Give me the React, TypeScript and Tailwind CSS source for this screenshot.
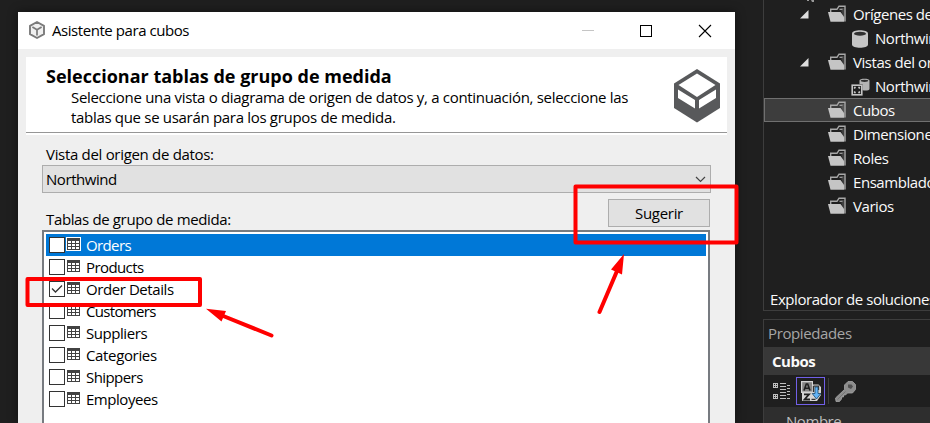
import React from "react";

const tables = [
  { name: "Orders", selected: true, tracking: "tracking-[-0.63px]" },
  { name: "Products", tracking: "tracking-[-0.59px]" },
  { name: "Order Details", checked: true, tracking: "tracking-[-0.42px]" },
  { name: "Customers", tracking: "tracking-[-0.68px]" },
  { name: "Suppliers", tracking: "tracking-[-0.44px]" },
  { name: "Categories", tracking: "tracking-[-0.35px]" },
  { name: "Shippers", tracking: "tracking-[-0.57px]" },
  { name: "Employees", tracking: "tracking-[-0.46px]" },
];

type TreeItem = { label: string; icon: "folder" | "db" | "view"; open?: boolean; selected?: boolean };

const tree: TreeItem[] = [
  { label: "Orígenes de", icon: "folder", open: true },
  { label: "Northwind", icon: "db" },
  { label: "Vistas del or", icon: "folder", open: true },
  { label: "Northwind", icon: "view" },
  { label: "Cubos", icon: "folder", selected: true },
  { label: "Dimensiones", icon: "folder" },
  { label: "Roles", icon: "folder" },
  { label: "Ensamblados", icon: "folder" },
  { label: "Varios", icon: "folder" },
];

function CubeOutline() {
  return (
    <svg width="16" height="18" viewBox="0 0 16 18" fill="#f0f0f0" stroke="#7b7b7b">
      <path d="M8 1 15 4.8V13.2L8 17 1 13.2V4.8Z" strokeWidth="1.9" strokeLinejoin="round" />
      <path d="M3.4 6 8 8.8 12.6 6M8 8.8V14.6" fill="none" strokeWidth="1.7" />
    </svg>
  );
}

function CubeLogo() {
  return (
    <svg width="46" height="54" viewBox="0 0 46 54">
      <path d="M23 0 46 14.5V39L23 53.500 0 39V14.500Z" fill="#58595b" />
      <path d="M23 4.500 41.500 16 23 28 4.500 16Z" fill="#fff" />
      <path d="M4 20.500 21 31V39.500L4 29ZM42 20.500 25 31V39.500L42 29Z" fill="#fff" />
    </svg>
  );
}

function TableIcon({ selected }: { selected?: boolean }) {
  return (
    <svg width="15" height="14" viewBox="0 0 15 14" shapeRendering="crispEdges">
      {selected && <rect width="15" height="14" fill="#fff" />}
      <rect x="1" y="1" width="13" height="12" fill="#424242" />
      <path
        d="M2 4h3v2H2zM6 4h3v2H6zM10 4h3v2h-3zM2 7h3v2H2zM6 7h3v2H6zM10 7h3v2h-3zM2 10h3v2H2zM6 10h3v2H6zM10 10h3v2h-3z"
        fill="#fff"
      />
    </svg>
  );
}

function FolderIcon() {
  return (
    <svg className="shrink-0" width="19" height="18" viewBox="0 0 19 18">
      <path d="M2.700 7V4.300H9L11 1.200H17V16.500" fill="none" stroke="#a8a8a8" strokeWidth="1.400" />
      <path d="M11.500 4.300H14.500" stroke="#a8a8a8" strokeWidth="1.200" />
      <path d="M0 7H12.500L16.200 12V16.800H2.500Z" fill="#c5c5c5" />
      <path d="M13.500 6.500 17.500 16.800V3H13.500Z" fill="#8f8f8f" fillOpacity=".3" />
    </svg>
  );
}

function DatabaseIcon() {
  return (
    <svg width="16" height="18" viewBox="0 0 16 18">
      <path d="M0 3.500C0-.8 16-.8 16 3.500V14.500C16 18.800 0 18.800 0 14.500Z" fill="#c5c5c5" />
      <ellipse cx="8" cy="3.700" rx="6" ry="2" fill="#303030" />
    </svg>
  );
}

function DataViewIcon() {
  return (
    <svg width="19" height="18" viewBox="0 0 19 18">
      <path d="M8.500 2.500C8.500.2 18.500.2 18.500 2.500V11C18.500 12.800 13 13 11.500 12V6H8.500Z" fill="#b5b5b5" />
      <ellipse cx="13.500" cy="2.800" rx="3.700" ry="1.100" fill="#303030" />
      <rect x="1.200" y="7.200" width="9.600" height="9.600" fill="#202020" stroke="#c5c5c5" strokeWidth="1.600" />
      <path d="M3.500 10.800V9.500H4.800M7.200 9.500H8.500V10.800M8.500 13.200V14.500H7.200M4.800 14.500H3.500V13.200" fill="none" stroke="#c5c5c5" strokeWidth="1.300" />
    </svg>
  );
}

function CategorizedIcon() {
  return (
    <svg width="18" height="17" viewBox="0 0 18 17" fill="none" stroke="#c0c0c0" shapeRendering="crispEdges">
      <path d="M.5.500h4v4h-4zM.5 11.500h4v4h-4z" />
      <path d="M1 2.500h3M2.500 1v3M1 13.500h3M2.500 12v3" />
      <path d="M7 .5h6M7 3.500h6M7 6.500h6M7 9.500h6M7 12.500h6M7 15.500h6M14 2.500h3M14 5.500h3M14 8.500h3M14 11.500h3M14 15.500h3" />
    </svg>
  );
}

function SortIcon() {
  return (
    <svg width="20" height="20" viewBox="0 0 20 20">
      <path d="M0 0h12v3.500h5.500L20 6v6.500h-1L20 14l-4 6H1v-8H0Z" fill="#d4d4d4" />
      <rect x="1.200" y="1.200" width="9.800" height="9.300" fill="#858585" />
      <path d="M3 9.500 5.300 3H6.700L9 9.500M4.200 7.300H7.800" stroke="#202020" strokeWidth="1.600" fill="none" />
      <path d="M3 13.300H8L3.500 18.500H9" stroke="#202020" strokeWidth="1.800" fill="none" />
      <path d="M12.500 5.200h5V9M12.500 5v6M10.500 18.300h4" stroke="#333" strokeWidth="1.300" fill="none" />
      <path d="M14 6h3v6.500h2.800L15.500 18 11.200 12.500H14Z" fill="#63b4f6" stroke="#17466d" strokeWidth=".8" />
    </svg>
  );
}

function KeyIcon() {
  return (
    <svg width="21" height="21" viewBox="0 0 21 21">
      <path
        d="M10.500 3 13 .5H17.500L20.500 3.500V8.500L17.500 12H12.500L10.500 14H8.500V16H6.500V18L4.500 20.500H1L.5 17 9.500 8.500V4Z"
        fill="#8d8d8d"
        stroke="#a5a5a5"
        strokeWidth=".8"
      />
      <path d="M13 3.500h3.500l1.500 2-2 2.500-3-1.500Z" fill="#505050" />
      <path d="M2.500 18.500 10.500 10.500" stroke="#747474" strokeWidth="1" />
    </svg>
  );
}

function Dialog() {
  return (
    <section className="flex w-[717px] flex-col bg-[#efefef] text-[15px] text-black shadow-[0_0_10px_rgba(0,0,0,0.45)]">
      <header className="flex h-[37px] shrink-0 items-center bg-white pl-[11px]">
        <span className="-mt-[2px]"><CubeOutline /></span>
        <h1 className="ml-[7px] flex-1 tracking-[-0.44px]">Asistente para cubos</h1>
        <div className="flex items-center pr-[23px]">
          <svg width="132" height="14" viewBox="0 0 132 14" fill="none" shapeRendering="crispEdges">
            <path d="M2 6.500h12" stroke="#c5c5c5" />
            <path d="M60.500 1.500h11v11h-11z" stroke="#000" />
            <path d="m119 1 12 12m0-12-12 12" stroke="#000" strokeWidth="1.100" shapeRendering="auto" />
          </svg>
        </div>
      </header>

      <div className="mx-2 mt-2 flex h-[78px] shrink-0 flex-col bg-white pb-[2px]">
        <div className="flex h-[76px] justify-between border-b border-[#969696] pl-5 pr-[7px]">
          <div className="whitespace-nowrap pt-[8px]">
            <h2 className="text-[18px] font-bold leading-[22px]">Seleccionar tablas de grupo de medida</h2>
            <p className="ml-[25px] leading-5 tracking-[-0.31px]">
              Seleccione una vista o diagrama de origen de datos y, a continuación, seleccione las
              <br />
              tablas que se usarán para los grupos de medida.
            </p>
          </div>
          <div className="pt-[12px]">
            <CubeLogo />
          </div>
        </div>
      </div>

      <div className="flex flex-1 flex-col pl-6 pr-[24px]">
        <label className="mt-2 block h-[22px] pl-1 leading-[22px] tracking-[-0.31px]">Vista del origen de datos:</label>
        <div className="flex h-[28px] shrink-0 items-center justify-between border border-[#adadad] bg-[#e1e1e1] pl-[3px] pr-[4px] tracking-[-0.44px]">
          <span className="pt-px">Northwind</span>
          <svg width="11" height="7" viewBox="0 0 11 7" fill="none" stroke="#444" strokeWidth="1.200">
            <path d="m1 1 4.500 4.500L10 1" />
          </svg>
        </div>
        <div className="flex h-[37px] shrink-0 items-start justify-between pr-px pt-[6px]">
          <label className="pl-1 pt-[9px] leading-[22px] tracking-[-0.36px]">Tablas de grupo de medida:</label>
          <button className="h-[28px] w-[102px] border border-[#adadad] bg-[#e1e1e1] leading-[26px] tracking-[-0.3px]">Sugerir</button>
        </div>
        <ul className="mr-px h-[210px] border-2 border-[#777b80] bg-white px-[2px] pt-[2px]">
          {tables.map((table) => (
            <li
              key={table.name}
              className={`flex h-[22px] items-center pl-[3px] ${table.selected ? "bg-[#0078d7] text-white" : ""}`}
            >
              <span className="flex size-4 items-center justify-center border border-[#333] bg-white">
                {table.checked && (
                  <svg width="12" height="10" viewBox="0 0 12 10" fill="none" stroke="#333" strokeWidth="1.300">
                    <path d="m1 4.500 3.500 3.500L11 1.500" />
                  </svg>
                )}
              </span>
              <span className="-mt-[2px] ml-px">
                <TableIcon selected={table.selected} />
              </span>
              <span className={`ml-[5px] pt-px ${table.tracking}`}>{table.name}</span>
            </li>
          ))}
        </ul>
      </div>
    </section>
  );
}

function TreeRow({ item }: { item: TreeItem }) {
  return (
    <li className={`flex h-6 items-center border ${item.selected ? "border-[#707070] bg-[#3d3d3d]" : "border-transparent"}`}>
      <span className="ml-[35px] flex w-[28px] shrink-0">
        {item.open && (
          <svg width="9" height="9" viewBox="0 0 9 9">
            <path d="M8.500 0V8.500H0Z" fill="#dedede" />
          </svg>
        )}
      </span>
      {item.icon === "folder" && (
        <>
          <FolderIcon />
          <span className="ml-[6px] pt-px">{item.label}</span>
        </>
      )}
      {item.icon === "db" && (
        <>
          <span className="ml-[24px] shrink-0 pt-[2px]"><DatabaseIcon /></span>
          <span className="ml-[7px] pt-px">{item.label}</span>
        </>
      )}
      {item.icon === "view" && (
        <>
          <span className="ml-[23px] shrink-0 pt-[2px]"><DataViewIcon /></span>
          <span className="ml-[5px] pt-px">{item.label}</span>
        </>
      )}
    </li>
  );
}

function Sidebar() {
  return (
    <aside className="flex w-[167px] shrink-0 flex-col overflow-hidden whitespace-nowrap text-[15px] tracking-[-0.44px] text-[#fafafa]">
      <section className="flex h-[311px] shrink-0 flex-col border-b border-l border-[#3d3d3d]">
        <div className="h-[2px] pl-[43px]">
          <svg width="7" height="2" viewBox="0 0 7 2">
            <path d="M0 0h2v1H0zM4 0h3v2H5Z" fill="#999" />
          </svg>
        </div>
        <ul className="w-[200px]">
          {tree.map((item, index) => (
            <TreeRow key={index} item={item} />
          ))}
        </ul>
        <div className="mt-auto h-[22px] pl-[6px] leading-[22px]">Explorador de soluciones</div>
      </section>
      <section className="mt-2 flex flex-1 flex-col border-l border-t border-[#3d3d3d]">
        <h2 className="h-[27px] shrink-0 pl-[4px] leading-[27px] tracking-[-0.38px] text-[#a6a6a6]">Propiedades</h2>
        <div className="h-[28px] shrink-0 bg-[#383838] pl-2 font-bold leading-[29px] tracking-[-0.5px]">Cubos</div>
        <div className="flex h-[32px] shrink-0 items-center pl-[9px]">
          <CategorizedIcon />
          <span className="ml-[5px] flex h-[28px] w-[29px] items-center justify-center border border-[#7160e8]">
            <SortIcon />
          </span>
          <span className="ml-[3px] h-[26px] w-px bg-[#3d3d3d]" />
          <span className="ml-[6px]"><KeyIcon /></span>
        </div>
        <div className="-mb-6 h-[40px] shrink-0 bg-[#2e2e2e] pl-[22px] pt-[4px] leading-[20px] text-[#bdbdbd]">Nombre</div>
      </section>
    </aside>
  );
}

function Annotations() {
  return (
    <svg className="pointer-events-none absolute inset-0" width="930" height="423" viewBox="0 0 930 423" fill="none" stroke="#ff0000">
      <rect x="575.500" y="186.500" width="161" height="56" strokeWidth="4" strokeLinejoin="round" />
      <rect x="27.500" y="279" width="172.500" height="26" strokeWidth="4" strokeLinejoin="round" />
      <path d="M599.500 312 617 271M271.500 335.500 222 315.500" strokeWidth="4" strokeLinecap="round" />
      <path d="M624 254 611 269.500 622 274.500ZM206 308.800 226 311 221.500 321.500Z" fill="#ff0000" stroke="none" />
    </svg>
  );
}

export default function App() {
  return (
    <main className="relative flex h-[423px] w-[930px] overflow-hidden bg-[#1f1f1f] font-['Open_Sans','Noto_Sans',sans-serif]">
      <div className="flex w-[763px] shrink-0 pl-[18px] pt-3">
        <Dialog />
      </div>
      <Sidebar />
      <Annotations />
    </main>
  );
}
